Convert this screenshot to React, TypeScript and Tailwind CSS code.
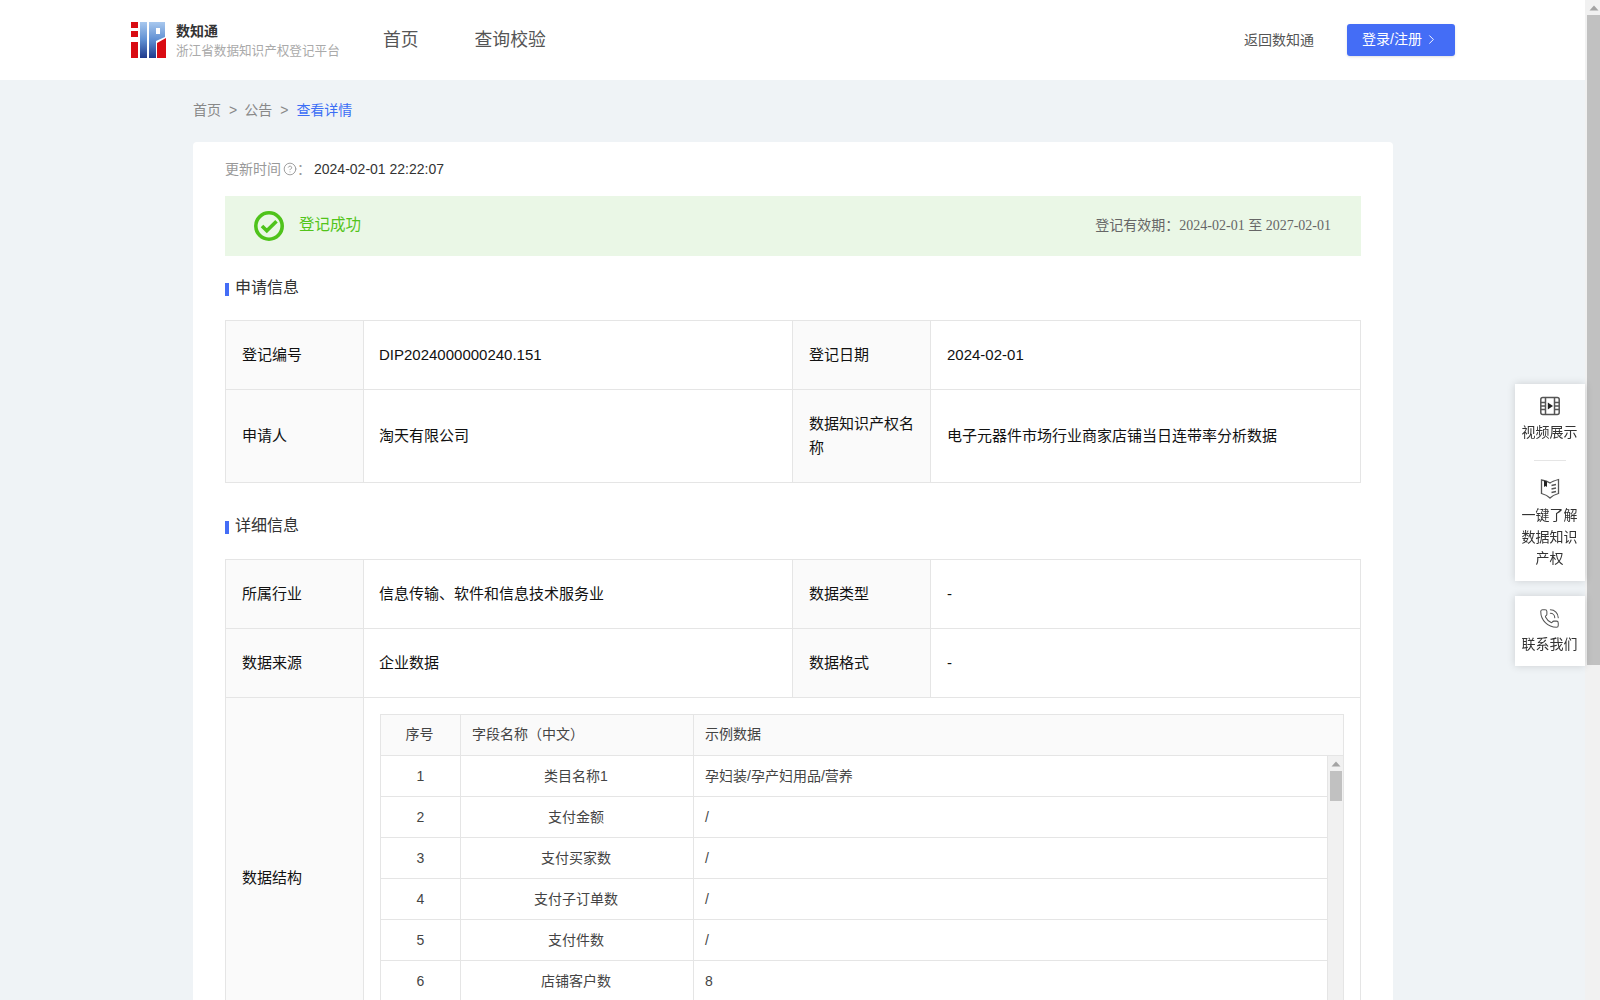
import { CircleHelp, ChevronRight, PhoneCall } from "lucide-react";
import type { ReactNode } from "react";

function Logo() {
  return (
    <svg width="35" height="36" viewBox="0 0 35 36">
      <defs>
        <linearGradient id="bl" x1="0" y1="0" x2="0" y2="1">
          <stop offset="0" stopColor="#a8c8ee" />
          <stop offset="0.5" stopColor="#5f8fd2" />
          <stop offset="1" stopColor="#1f3a8c" />
        </linearGradient>
      </defs>
      <rect x="0" y="0" width="7" height="6" fill="#d90b12" />
      <rect x="0" y="9" width="7" height="6" fill="#d90b12" />
      <rect x="0" y="20" width="7" height="16" fill="#d90b12" />
      <rect x="9" y="0" width="7" height="36" fill="url(#bl)" />
      <path d="M18 0H34V15L25 19V36H18Z M25 6V12H29V6Z" fill="url(#bl)" fillRule="evenodd" />
      <path d="M26 21L35 16V36H26Z" fill="#d90b12" />
    </svg>
  );
}

function FilmIcon() {
  return (
    <svg width="20" height="20" viewBox="0 0 20 20" fill="none" stroke="#555" strokeWidth="1.5">
      <rect x="0.8" y="1.5" width="18.4" height="17" rx="2" />
      <path d="M5.5 1.5V18.5M14.5 1.5V18.5M1 6.5H5.5M1 10H5.5M1 13.5H5.5M14.5 6.5H19M14.5 10H19M14.5 13.5H19" />
      <path d="M7.8 6.5L13 10L7.8 13.5Z" fill="#222" stroke="none" />
    </svg>
  );
}

function BookIcon() {
  return (
    <svg width="20" height="21" viewBox="0 0 20 21" fill="none" stroke="#555" strokeWidth="1.3">
      <path d="M10 5C8 3.5 5 2.5 1.5 2V15.5C5 16.5 8 18 10 20C12 18 15 16.5 18.5 15.5V1.5C15 2.5 12 3.5 10 5Z" />
      <path d="M4 2.5V9L5.5 8L7 9V3.5Z" fill="#222" stroke="none" />
      <path d="M11.5 7.5L16 6.5M11.5 11L16 10M11.5 14.5L16 13.5" />
    </svg>
  );
}

function Scroll_Arrow() {
  return (
    <svg width="10" height="6" viewBox="0 0 10 6" className="mx-auto">
      <path d="M5 0.5L9.5 5.5H0.5Z" fill="#a3a3a3" />
    </svg>
  );
}

function Cell({ label, last, children }: { label?: boolean; last?: boolean; children: ReactNode }) {
  return (
    <div
      className={`flex items-center px-4 border-b border-[#e5e5e5] text-[15px] leading-6 text-[#111] ${last ? "" : "border-r"} ${label ? "bg-[#fafafa]" : ""}`}
    >
      <div>{children}</div>
    </div>
  );
}

// second column sits a pixel further left than the others
function ValueCell({ children }: { children: ReactNode }) {
  return (
    <div className="flex items-center pl-[15px] pr-4 border-b border-r border-[#e5e5e5] text-[15px] leading-6 text-[#111]">
      <div>{children}</div>
    </div>
  );
}

function Heading({ children }: { children: ReactNode }) {
  return (
    <div className="flex items-center h-6 text-[16px] text-[#333]">
      <span className="w-1 h-[13px] mt-[2px] bg-[#446df6] mr-[6px]"></span>
      {children}
    </div>
  );
}

const rows = [
  ["1", "类目名称1", "孕妇装/孕产妇用品/营养"],
  ["2", "支付金额", "/"],
  ["3", "支付买家数", "/"],
  ["4", "支付子订单数", "/"],
  ["5", "支付件数", "/"],
  ["6", "店铺客户数", "8"],
];

export default function App() {
  return (
    <div className="flex h-screen overflow-hidden bg-[#eff3f6] font-['Liberation_Sans','Noto_Sans_CJK_SC',sans-serif]">
      <div className="flex-1 min-w-0 h-full overflow-hidden">
        <header className="h-20 bg-white flex items-center pl-[131px] pr-[130px]">
          <Logo />
          <div className="ml-[10px] w-[207px]">
            <div className="text-[14px] leading-5 font-bold text-[#333]">数知通</div>
            <div className="text-[12.6px] leading-[18px] mt-[1px] text-[#aaa] whitespace-nowrap">浙江省数据知识产权登记平台</div>
          </div>
          <nav className="flex gap-[56px] text-[17.8px] text-[#555]">
            <span>首页</span>
            <span>查询校验</span>
          </nav>
          <div className="ml-auto flex items-center gap-[33px]">
            <span className="text-[14px] text-[#555]">返回数知通</span>
            <button className="w-[108px] h-8 rounded-[3px] bg-[#446df6] text-white text-[14px] flex items-center justify-center gap-[2px] pr-px shadow-sm">
              <span className="pb-[2px]">登录/注册</span>
              <ChevronRight size={15} strokeWidth={1.5} className="mb-px" />
            </button>
          </div>
        </header>

        <div className="w-[1200px] ml-[193px]">
          <div className="h-[62px] pb-[2px] flex items-center gap-2 text-[14px] text-[#888]">
            <span>首页</span>
            <span className="-mr-px">&gt;</span>
            <span>公告</span>
            <span>&gt;</span>
            <span className="text-[#3b6ef5]">查看详情</span>
          </div>

          <div className="bg-white rounded-[4px] pt-[17px] px-8">
            <div className="h-5 flex items-center text-[14px]">
              <span className="text-[#999]">更新时间</span>
              <CircleHelp size={14} strokeWidth={1.6} className="text-[#999] ml-[2px]" />
              <span className="text-[#999] w-[17px]">：</span>
              <span className="text-[#333]">2024-02-01 22:22:07</span>
            </div>

            <div className="mt-[17px] h-[60px] bg-[#eaf7e6] flex items-center pl-[29px] pr-[30px]">
              <svg width="30" height="30" viewBox="0 0 30 30" fill="none" stroke="#4fc31b">
                <circle cx="15" cy="15" r="13.2" strokeWidth="3.6" />
                <path d="M8 15L12.8 19.8L22.5 10.2" strokeWidth="3.6" />
              </svg>
              <span className="ml-[15px] pb-[2px] text-[15.5px] text-[#52c41a]">登记成功</span>
              <span className="ml-auto pb-[2px] text-[14px] text-[#666] font-['Liberation_Serif','Noto_Sans_CJK_SC',serif]">
                登记有效期：2024-02-01 至 2027-02-01
              </span>
            </div>

            <div className="mt-[20px]">
              <Heading>申请信息</Heading>
            </div>
            <div className="mt-[20px] grid grid-cols-[138px_429px_138px_1fr] grid-rows-[69px_93px] border-t border-x border-[#e5e5e5]">
              <Cell label>登记编号</Cell>
              <ValueCell>DIP2024000000240.151</ValueCell>
              <Cell label>登记日期</Cell>
              <Cell last>2024-02-01</Cell>
              <Cell label>申请人</Cell>
              <ValueCell>淘天有限公司</ValueCell>
              <Cell label>数据知识产权名称</Cell>
              <Cell last>电子元器件市场行业商家店铺当日连带率分析数据</Cell>
            </div>

            <div className="mt-[31px]">
              <Heading>详细信息</Heading>
            </div>
            <div className="mt-[21px] grid grid-cols-[138px_429px_138px_1fr] grid-rows-[69px_69px] border-t border-x border-[#e5e5e5]">
              <Cell label>所属行业</Cell>
              <ValueCell>信息传输、软件和信息技术服务业</ValueCell>
              <Cell label>数据类型</Cell>
              <Cell last>-</Cell>
              <Cell label>数据来源</Cell>
              <ValueCell>企业数据</ValueCell>
              <Cell label>数据格式</Cell>
              <Cell last>-</Cell>
            </div>
            <div className="grid grid-cols-[138px_1fr] border-x border-b border-[#e5e5e5]">
              <div className="flex items-center px-4 pb-[2px] border-r border-[#e5e5e5] bg-[#fafafa] text-[15px] text-[#111]">数据结构</div>
              <div className="p-4">
                <div className="border border-[#e5e5e5] text-[14px] text-[#444]">
                  <div className="grid grid-cols-[80px_233px_1fr] h-[41px] pb-0 bg-[#fafafa] border-b border-[#e5e5e5] items-stretch">
                    <div className="flex items-center justify-center pb-px pr-[2px] border-r border-[#e5e5e5]">序号</div>
                    <div className="flex items-center pb-px pl-[11px] border-r border-[#e5e5e5]">字段名称（中文）</div>
                    <div className="flex items-center pb-px pl-[11px]">示例数据</div>
                  </div>
                  <div className="flex h-[288px] overflow-hidden">
                    <div className="flex-1 min-w-0 border-r border-[#e5e5e5]">
                      {rows.map((r) => (
                        <div key={r[0]} className="grid grid-cols-[80px_233px_1fr] h-[41px] border-b border-[#e5e5e5]">
                          <div className="flex items-center justify-center border-r border-[#e5e5e5]">{r[0]}</div>
                          <div className="flex items-center justify-center pr-[2px] border-r border-[#e5e5e5]">{r[1]}</div>
                          <div className="flex items-center pl-[11px]">{r[2]}</div>
                        </div>
                      ))}
                    </div>
                    <div className="w-[15px] bg-[#f1f1f1] pl-[2px] pr-px">
                      <div className="h-[15px] pt-[5px]">
                        <Scroll_Arrow />
                      </div>
                      <div className="h-[30px] bg-[#c1c1c1]"></div>
                    </div>
                  </div>
                </div>
              </div>
            </div>
          </div>
        </div>
      </div>

      <div className="w-[15px] h-full bg-[#f1f1f1] pl-[2px]">
        <div className="h-[15px] pt-[5px]">
          <Scroll_Arrow />
        </div>
        <div className="h-[650px] bg-[#c1c1c1]"></div>
      </div>

      <div className="fixed right-[15px] top-[384px] w-[70px] text-[14px] text-[#333] text-center">
        <div className="h-[197px] bg-white shadow-[0_0_8px_rgba(0,0,0,0.15)] pt-[12px] pr-px">
          <div className="flex justify-center">
            <FilmIcon />
          </div>
          <div className="mt-[5px] leading-[22px]">视频展示</div>
          <div className="w-8 h-px bg-[#e5e5e5] mx-auto mt-[17px]"></div>
          <div className="flex justify-center mt-[17px]">
            <BookIcon />
          </div>
          <div className="mt-[6px] leading-[21.5px]">
            一键了解
            <br />
            数据知识
            <br />
            产权
          </div>
        </div>
        <div className="mt-[15px] h-[70px] bg-white shadow-[0_0_8px_rgba(0,0,0,0.15)] pt-[12px] pr-px">
          <div className="flex justify-center">
            <PhoneCall size={21} strokeWidth={1.2} className="text-[#555]" />
          </div>
          <div className="mt-[4px] leading-[22px]">联系我们</div>
        </div>
      </div>
    </div>
  );
}
